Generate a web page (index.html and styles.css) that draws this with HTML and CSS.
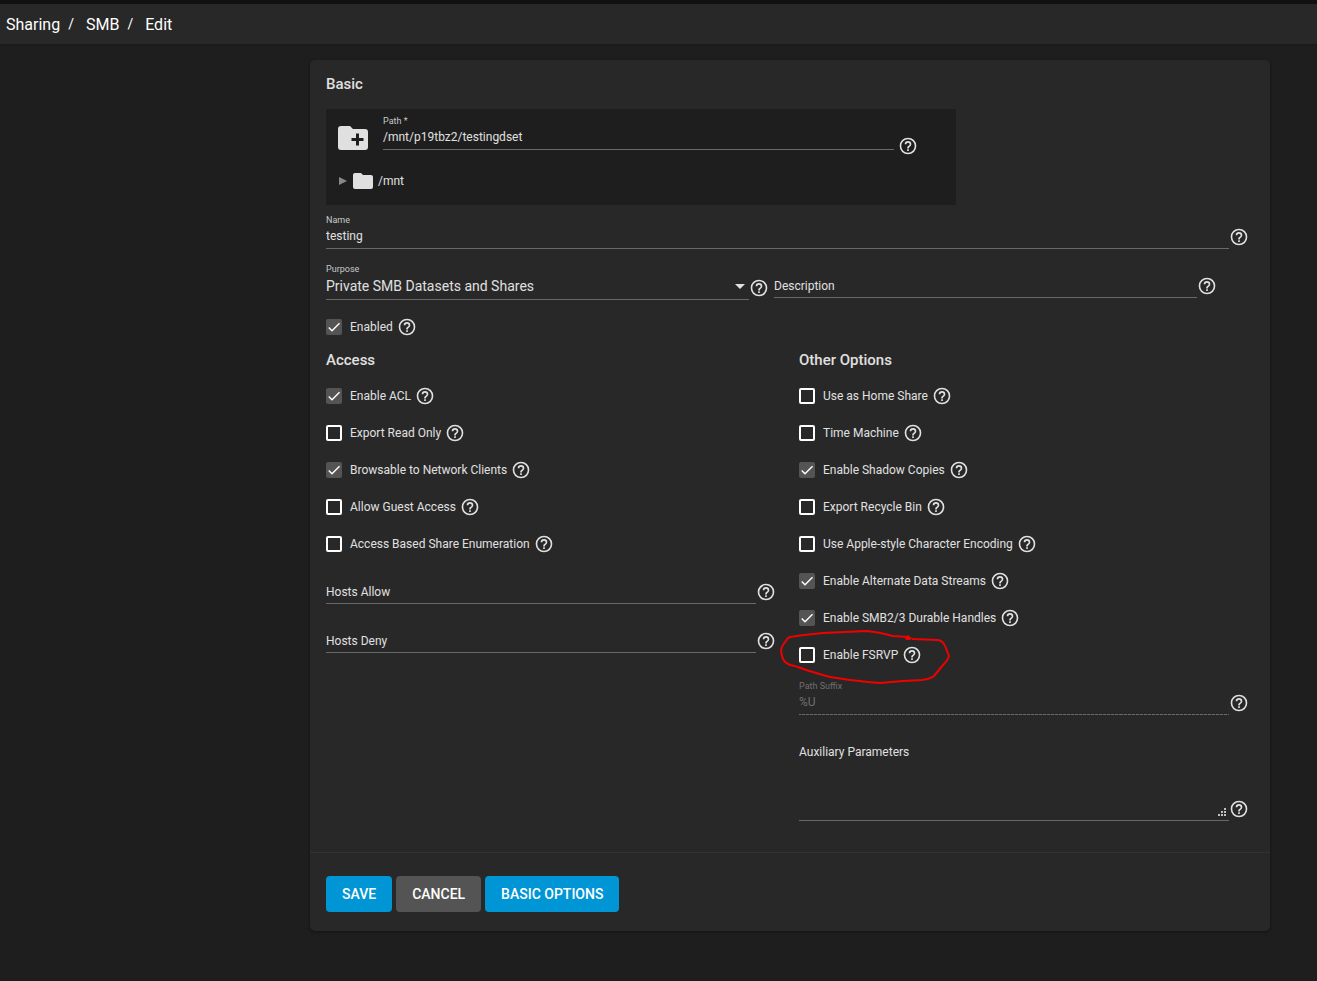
FILE: index.html
```
<!DOCTYPE html>
<html lang="en">
<head>
  <meta charset="UTF-8">
  <meta name="viewport" content="width=device-width, initial-scale=1.0">

  <title>Sharing / SMB / Edit</title>

  <link rel="stylesheet" href="styles.css">
</head>
<body>

  <svg class="sprite" aria-hidden="true">
    <symbol id="help" viewBox="0 0 24 24">
      <path d="M11,18H13V16H11V18M12,2A10,10 0 0,0 2,12A10,10 0 0,0 12,22A10,10 0 0,0 22,12A10,10 0 0,0 12,2M12,20C7.59,20 4,16.41 4,12C4,7.59 7.59,4 12,4C16.41,4 20,7.59 20,12C20,16.41 16.41,20 12,20M12,6A4,4 0 0,0 8,10H10A2,2 0 0,1 12,8A2,2 0 0,1 14,10C14,12 11,11.75 11,15H13C13,12.75 16,12.5 16,10A4,4 0 0,0 12,6Z"/>
    </symbol>
    <symbol id="folder" viewBox="0 0 24 24">
      <path d="M10,4H4C2.89,4 2,4.89 2,6V18A2,2 0 0,0 4,20H20A2,2 0 0,0 22,18V8C22,6.89 21.1,6 20,6H12L10,4Z"/>
    </symbol>
    <symbol id="folder-add" viewBox="0 0 24 24">
      <path d="M20,6H12L10,4H4A2,2 0 0,0 2,6V18A2,2 0 0,0 4,20H20A2,2 0 0,0 22,18V8A2,2 0 0,0 20,6M19,14H16V17H14V14H11V12H14V9H16V12H19V14Z"/>
    </symbol>
  </svg>

  <header class="topbar">
    <nav class="breadcrumb" aria-label="Breadcrumb">
      <a href="#">Sharing</a>
      <span class="slash">/</span>
      <a href="#">SMB</a>
      <span class="slash">/</span>
      <a href="#">Edit</a>
    </nav>
  </header>

  <main class="page">
    <form class="card" action="#" method="post">
      <div class="card-body">
        <h2 class="title">Basic</h2>

        <div class="explorer">
          <div class="explorer-row">
            <svg class="folder-add"><use href="#folder-add"/></svg>
            <div class="field">
              <label for="path">Path *</label>
              <input type="text" id="path" name="path" value="/mnt/p19tbz2/testingdset">
            </div>
            <svg class="help"><use href="#help"/></svg>
          </div>
          <div class="tree">
            <svg class="expander" viewBox="0 0 8 8"><path d="M0,0L8,4L0,8Z"/></svg>
            <svg class="folder"><use href="#folder"/></svg>
            <span>/mnt</span>
          </div>
        </div>

        <div class="field-row">
          <div class="field">
            <label for="name">Name</label>
            <input type="text" id="name" name="name" value="testing">
          </div>
          <svg class="help"><use href="#help"/></svg>
        </div>

        <div class="purpose-row">
          <div class="field-row">
            <div class="field">
              <label for="purpose">Purpose</label>
              <select id="purpose" name="purpose">
                <option>Private SMB Datasets and Shares</option>
              </select>
            </div>
            <svg class="help"><use href="#help"/></svg>
          </div>
          <div class="field-row">
            <div class="field field-empty">
              <input type="text" name="description" placeholder="Description" aria-label="Description">
            </div>
            <svg class="help"><use href="#help"/></svg>
          </div>
        </div>

        <div class="check enabled">
          <input type="checkbox" id="enabled" checked>
          <label for="enabled">Enabled</label>
          <svg class="help"><use href="#help"/></svg>
        </div>

        <div class="columns">
          <section class="column">
            <h2 class="title">Access</h2>
            <div class="checks">
              <div class="check">
                <input type="checkbox" id="acl" checked>
                <label for="acl">Enable ACL</label>
                <svg class="help"><use href="#help"/></svg>
              </div>
              <div class="check">
                <input type="checkbox" id="readonly">
                <label for="readonly">Export Read Only</label>
                <svg class="help"><use href="#help"/></svg>
              </div>
              <div class="check">
                <input type="checkbox" id="browsable" checked>
                <label for="browsable">Browsable to Network Clients</label>
                <svg class="help"><use href="#help"/></svg>
              </div>
              <div class="check">
                <input type="checkbox" id="guest">
                <label for="guest">Allow Guest Access</label>
                <svg class="help"><use href="#help"/></svg>
              </div>
              <div class="check">
                <input type="checkbox" id="abe">
                <label for="abe">Access Based Share Enumeration</label>
                <svg class="help"><use href="#help"/></svg>
              </div>
            </div>

            <div class="field-row">
              <div class="field field-empty">
                <input type="text" name="hostsallow" placeholder="Hosts Allow" aria-label="Hosts Allow">
              </div>
              <svg class="help"><use href="#help"/></svg>
            </div>
            <div class="field-row">
              <div class="field field-empty">
                <input type="text" name="hostsdeny" placeholder="Hosts Deny" aria-label="Hosts Deny">
              </div>
              <svg class="help"><use href="#help"/></svg>
            </div>
          </section>

          <section class="column">
            <h2 class="title">Other Options</h2>
            <div class="checks">
              <div class="check">
                <input type="checkbox" id="home">
                <label for="home">Use as Home Share</label>
                <svg class="help"><use href="#help"/></svg>
              </div>
              <div class="check">
                <input type="checkbox" id="timemachine">
                <label for="timemachine">Time Machine</label>
                <svg class="help"><use href="#help"/></svg>
              </div>
              <div class="check">
                <input type="checkbox" id="shadowcopy" checked>
                <label for="shadowcopy">Enable Shadow Copies</label>
                <svg class="help"><use href="#help"/></svg>
              </div>
              <div class="check">
                <input type="checkbox" id="recyclebin">
                <label for="recyclebin">Export Recycle Bin</label>
                <svg class="help"><use href="#help"/></svg>
              </div>
              <div class="check">
                <input type="checkbox" id="aapl">
                <label for="aapl">Use Apple-style Character Encoding</label>
                <svg class="help"><use href="#help"/></svg>
              </div>
              <div class="check">
                <input type="checkbox" id="streams" checked>
                <label for="streams">Enable Alternate Data Streams</label>
                <svg class="help"><use href="#help"/></svg>
              </div>
              <div class="check">
                <input type="checkbox" id="durable" checked>
                <label for="durable">Enable SMB2/3 Durable Handles</label>
                <svg class="help"><use href="#help"/></svg>
              </div>
              <div class="check">
                <input type="checkbox" id="fsrvp">
                <label for="fsrvp">Enable FSRVP</label>
                <svg class="help"><use href="#help"/></svg>
                <!-- hand-drawn marker around the option -->
                <svg class="marker" viewBox="0 0 184 68" aria-hidden="true">
                  <path d="M142,19L168,20Q173,21 175,26L179,36Q178,40 173,45L164,56Q160,59 152,60L133,61L110,63Q85,61 67,58C56,57 50,54 43,52C34,50 28,46 20,45Q13,42 12,36Q10,29 13,25L18,18Q21,16 53,13L97,11Q108,12 123,16L138,17Q144,19 137,19Q134,18 139,16"/>
                </svg>
              </div>
            </div>

            <div class="field-row">
              <div class="field field-disabled">
                <label for="suffix">Path Suffix</label>
                <input type="text" id="suffix" name="suffix" value="%U" disabled>
              </div>
              <svg class="help"><use href="#help"/></svg>
            </div>
            <div class="field-row">
              <div class="field field-area">
                <textarea name="auxsmbconf" placeholder="Auxiliary Parameters" aria-label="Auxiliary Parameters"></textarea>
                <svg class="grip" viewBox="0 0 8 8" aria-hidden="true"><path d="M6,0h2v2h-2zM3,3h2v2h-2zM6,3h2v2h-2zM0,6h2v2h-2zM3,6h2v2h-2zM6,6h2v2h-2z"/></svg>
              </div>
              <svg class="help"><use href="#help"/></svg>
            </div>
          </section>
        </div>
      </div>

      <div class="card-actions">
        <button type="submit" class="btn btn-primary">SAVE</button>
        <button type="button" class="btn">CANCEL</button>
        <button type="button" class="btn btn-primary">BASIC OPTIONS</button>
      </div>
    </form>
  </main>

</body>
</html>
```

FILE: styles.css
```
* {
  box-sizing: border-box;
}
body {
  margin: 0;
  min-height: 100vh;
  background-color: #1e1e1e;
  color: #e0e0e0;
  font-family: Roboto, "Liberation Sans", sans-serif;
  font-size: 12px;
}
svg {
  display: block;
  flex: none;
  fill: #e0e0e0;
}
.sprite {
  display: none;
}

/* Top bar */
.topbar {
  border-top: 4px solid #111;
  background-color: #282828;
  box-shadow: 0 1px 2px rgba(0, 0, 0, 0.2);
}
.breadcrumb {
  display: flex;
  align-items: center;
  height: 40px;
  padding-left: 6px;
  font-size: 16px;
}
.breadcrumb a {
  color: #fff;
  text-decoration: none;
}
.slash {
  margin: 0 12px 0 8px;
  color: #fff;
  font-size: 14px;
}

/* Card */
.page {
  padding: 16px 47px 50px 16px;
}
.card {
  max-width: 960px;
  margin-left: auto;
  border-radius: 5px;
  background-color: #282828;
  box-shadow: 0 1px 3px rgba(0, 0, 0, 0.4);
}
.card-body {
  padding: 12px 21px 31px 16px;
}
.title {
  margin: 0;
  font-size: 15px;
  font-weight: 500;
  line-height: 24px;
}

/* Path explorer */
.explorer {
  max-width: 630px;
  height: 96px;
  margin: 13px 0 9px;
  padding: 6px 38px 0 9px;
  background-color: #1e1e1e;
}
.explorer-row {
  display: flex;
  align-items: flex-end;
}
.explorer-row .field {
  margin-left: 12px;
}
.explorer-row .help {
  margin: 0 0 -6px 4px;
}
.folder-add {
  width: 36px;
  height: 36px;
  margin-bottom: -6px;
}
.tree {
  display: flex;
  align-items: center;
  margin-top: 19px;
  padding-left: 4px;
}
.expander {
  width: 8px;
  height: 8px;
  margin-right: 4px;
  fill: #888;
}
.folder {
  width: 24px;
  height: 24px;
  margin-right: 3px;
}

/* Fields */
.field-row {
  display: flex;
  align-items: flex-end;
}
.field-row + .field-row {
  margin-top: 14px;
}
.field {
  position: relative;
  flex: 1;
  min-width: 0;
  padding-bottom: 2px;
  border-bottom: 1px solid #696969;
}
.field label {
  display: block;
  font-size: 9px;
  line-height: 12px;
  color: #c8c8c8;
}
.field input,
.field select,
.field textarea {
  display: block;
  width: 100%;
  height: 20px;
  margin: 0;
  padding: 0;
  border: 0;
  outline: 0;
  background: none;
  color: #e0e0e0;
  font: inherit;
  line-height: 20px;
}
.field ::placeholder {
  color: #e0e0e0;
  opacity: 1;
}
.field select {
  height: 22px;
  appearance: none;
  background: url("data:image/svg+xml,%3Csvg xmlns='http://www.w3.org/2000/svg' width='10' height='5'%3E%3Cpath d='M0 0h10L5 5z' fill='%23e0e0e0'/%3E%3C/svg%3E") no-repeat right 4px center;
  font-size: 14px;
}
.field-empty {
  padding: 13px 0 1px;
}
.field-disabled {
  border-image: repeating-linear-gradient(90deg, #696969 0 3px, #383838 3px 4px) 1;
}
.field.field-disabled label,
.field.field-disabled input {
  color: #6f6f6f;
}
.field-area {
  padding-top: 13px;
}
.field textarea {
  height: 76px;
  resize: none;
}
.grip {
  position: absolute;
  right: 3px;
  bottom: 4px;
  width: 8px;
  height: 8px;
  fill: #c0c0c0;
}
.help {
  width: 20px;
  height: 20px;
  margin-bottom: 2px;
}
.purpose-row {
  display: grid;
  grid-template-columns: 1fr 1fr;
  align-items: start;
  gap: 5px;
  margin-top: 14px;
  padding-right: 32px;
}
.purpose-row .field-row {
  margin-top: 0;
}

/* Check boxes */
.check {
  position: relative;
  display: flex;
  align-items: center;
  height: 37px;
  padding: 10px 0 11px;
  line-height: 16px;
}
.check input {
  flex: none;
  width: 16px;
  height: 16px;
  margin: 0 8px 0 0;
  border: 2px solid #fff;
  border-radius: 2px;
  appearance: none;
}
.check input:checked {
  border: 0;
  background: #545454 url("data:image/svg+xml,%3Csvg xmlns='http://www.w3.org/2000/svg' viewBox='0 0 24 24'%3E%3Cpath d='M4.1 12.7L9 17.6 20.3 6.3' fill='none' stroke='%23fff' stroke-width='2.1'/%3E%3C/svg%3E");
}
.check .help {
  margin: -2px 0 -2px 4px;
}
.enabled {
  margin: 9px 0 2px;
}
.columns {
  display: grid;
  grid-template-columns: 1fr 1fr;
  gap: 23px;
}
.checks {
  margin: 6px 0;
}
.check .marker {
  position: absolute;
  left: -29px;
  top: -17px;
  width: 184px;
  height: 68px;
  fill: none;
  stroke: #f00000;
  stroke-width: 2;
  pointer-events: none;
}

/* Buttons */
.card-actions {
  display: flex;
  gap: 4px;
  padding: 23px 16px 19px;
  border-top: 1px solid #333;
}
.btn {
  height: 36px;
  padding: 0 16px;
  border: 0;
  border-radius: 4px;
  background-color: #545454;
  color: #fff;
  font: 500 14px Roboto, "Liberation Sans", sans-serif;
}
.btn-primary {
  background-color: #0095d5;
}
```
